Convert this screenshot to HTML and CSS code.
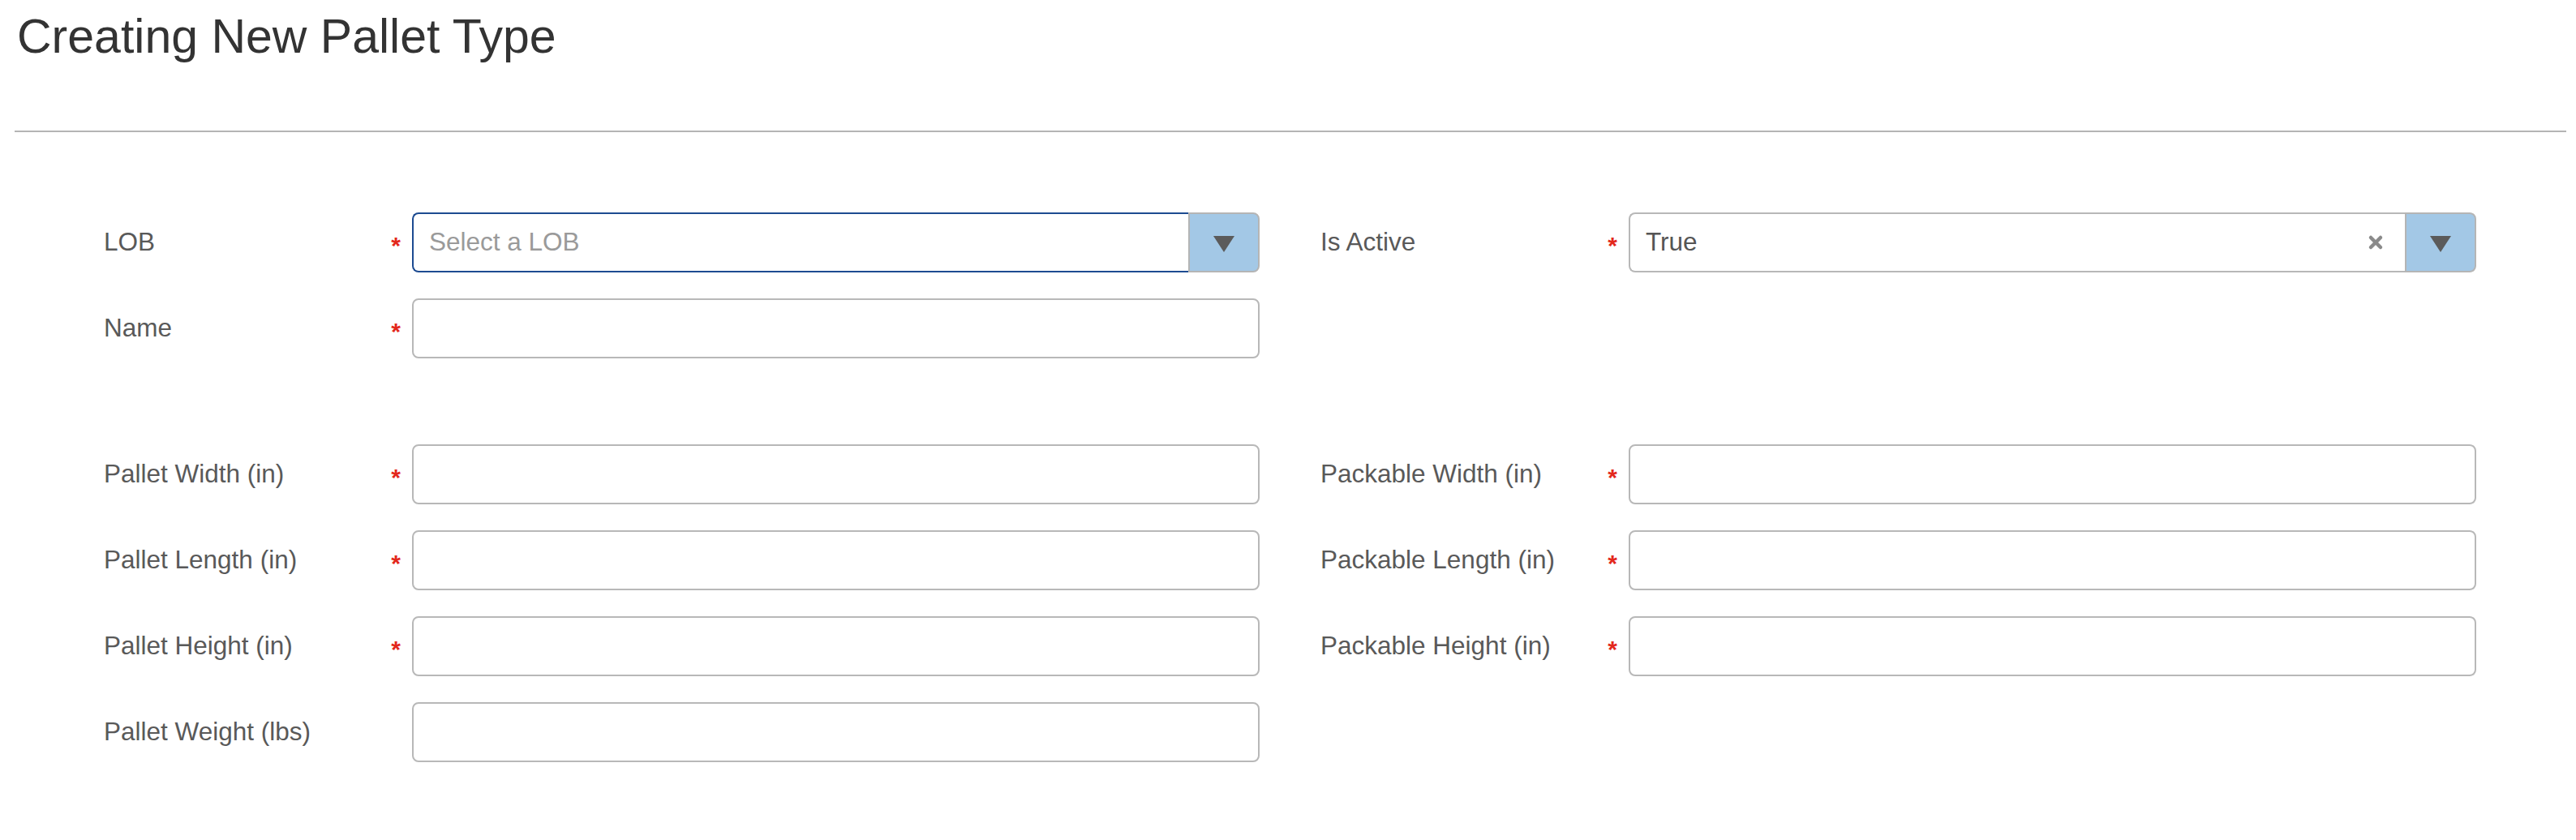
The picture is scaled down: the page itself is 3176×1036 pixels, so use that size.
FILE: index.html
```html
<!DOCTYPE html>
<html lang="en">
<head>
  <meta charset="UTF-8" />
  <meta name="viewport" content="width=device-width, initial-scale=1.0" />
  <title>Creating New Pallet Type</title>
  <link rel="stylesheet" href="styles.css">
</head>
<body>
  <div class="page-header">
    <h1>Creating New Pallet Type</h1>
  </div>

  <form class="pallet-form">
    <div class="form-section">
      <div class="field">
        <label class="field-label">LOB <span class="req">*</span></label>
        <div class="select focused">
          <div class="select-field"><span class="placeholder">Select a LOB</span></div>
          <div class="select-btn"><span class="caret"></span></div>
        </div>
      </div>
      <div class="field">
        <label class="field-label">Is Active <span class="req">*</span></label>
        <div class="select">
          <div class="select-field">
            <span class="select-value">True</span>
            <svg class="select-clear" width="20" height="20" viewBox="0 0 20 20">
              <path d="M4 4 L16 16 M16 4 L4 16" stroke="#8a8a8a" stroke-width="4.5" stroke-linecap="round" />
            </svg>
          </div>
          <div class="select-btn"><span class="caret"></span></div>
        </div>
      </div>
      <div class="field">
        <label class="field-label">Name <span class="req">*</span></label>
        <input class="text-input" name="name" />
      </div>
      <div class="field empty"></div>
    </div>

    <div class="form-section">
      <div class="field">
        <label class="field-label">Pallet Width (in) <span class="req">*</span></label>
        <input class="text-input" name="palletWidth" />
      </div>
      <div class="field">
        <label class="field-label">Packable Width (in) <span class="req">*</span></label>
        <input class="text-input" name="packableWidth" />
      </div>
      <div class="field">
        <label class="field-label">Pallet Length (in) <span class="req">*</span></label>
        <input class="text-input" name="palletLength" />
      </div>
      <div class="field">
        <label class="field-label">Packable Length (in) <span class="req">*</span></label>
        <input class="text-input" name="packableLength" />
      </div>
      <div class="field">
        <label class="field-label">Pallet Height (in) <span class="req">*</span></label>
        <input class="text-input" name="palletHeight" />
      </div>
      <div class="field">
        <label class="field-label">Packable Height (in) <span class="req">*</span></label>
        <input class="text-input" name="packableHeight" />
      </div>
      <div class="field">
        <label class="field-label">Pallet Weight (lbs)</label>
        <input class="text-input" name="palletWeight" />
      </div>
      <div class="field empty"></div>
    </div>
  </form>
</body>
</html>
```

FILE: styles.css
```css
body {
  margin: 0;
  padding: 0 12px 0 18px;
  font-family: "Liberation Sans", Arial, sans-serif;
  background: #fff;
  color: #555;
}
.page-header {
  border-bottom: 2px solid #b5b5b5;
  padding-bottom: 82px;
}
.page-header h1 {
  margin: 0;
  padding: 12px 0 0 3px;
  font-size: 59px;
  font-weight: normal;
  line-height: 1.13;
  color: #333;
}
.pallet-form {
  padding: 99px 0 0 110px;
}
.form-section {
  display: grid;
  grid-template-columns: 1425px 1425px;
  column-gap: 75px;
  row-gap: 32px;
}
.form-section + .form-section {
  margin-top: 106px;
}
.field {
  display: flex;
  align-items: center;
  height: 74px;
}
.field-label {
  width: 380px;
  flex: 0 0 380px;
  box-sizing: border-box;
  padding-right: 14px;
  display: flex;
  justify-content: space-between;
  align-items: center;
  font-size: 31.5px;
  color: #595959;
}
.req {
  color: #e3281c;
  font-weight: bold;
  font-size: 30px;
  line-height: 1;
  padding-top: 8px;
}
.text-input {
  width: 1045px;
  height: 74px;
  box-sizing: border-box;
  border: 2px solid #b8b8b8;
  border-radius: 8px;
  padding: 0 19px;
  font: inherit;
  font-size: 31.5px;
  color: #555;
  outline: none;
}
.select {
  display: flex;
  width: 1045px;
  height: 74px;
}
.select-field {
  flex: 1;
  display: flex;
  align-items: center;
  justify-content: space-between;
  border: 2px solid #b8b8b8;
  border-right: none;
  border-radius: 8px 0 0 8px;
  padding: 0 26px 0 19px;
  font-size: 31.5px;
  color: #555;
}
.select.focused .select-field {
  border-color: #1d4b91;
}
.placeholder {
  color: #9a9a9a;
}
.select-btn {
  width: 88px;
  box-sizing: border-box;
  border: 2px solid #b5b5b5;
  border-radius: 0 8px 8px 0;
  background: #a3c8e6;
  display: flex;
  align-items: center;
  justify-content: center;
}
.caret {
  width: 0;
  height: 0;
  border-left: 13px solid transparent;
  border-right: 13px solid transparent;
  border-top: 20px solid #5b5b5b;
  margin-top: 4px;
}
```
